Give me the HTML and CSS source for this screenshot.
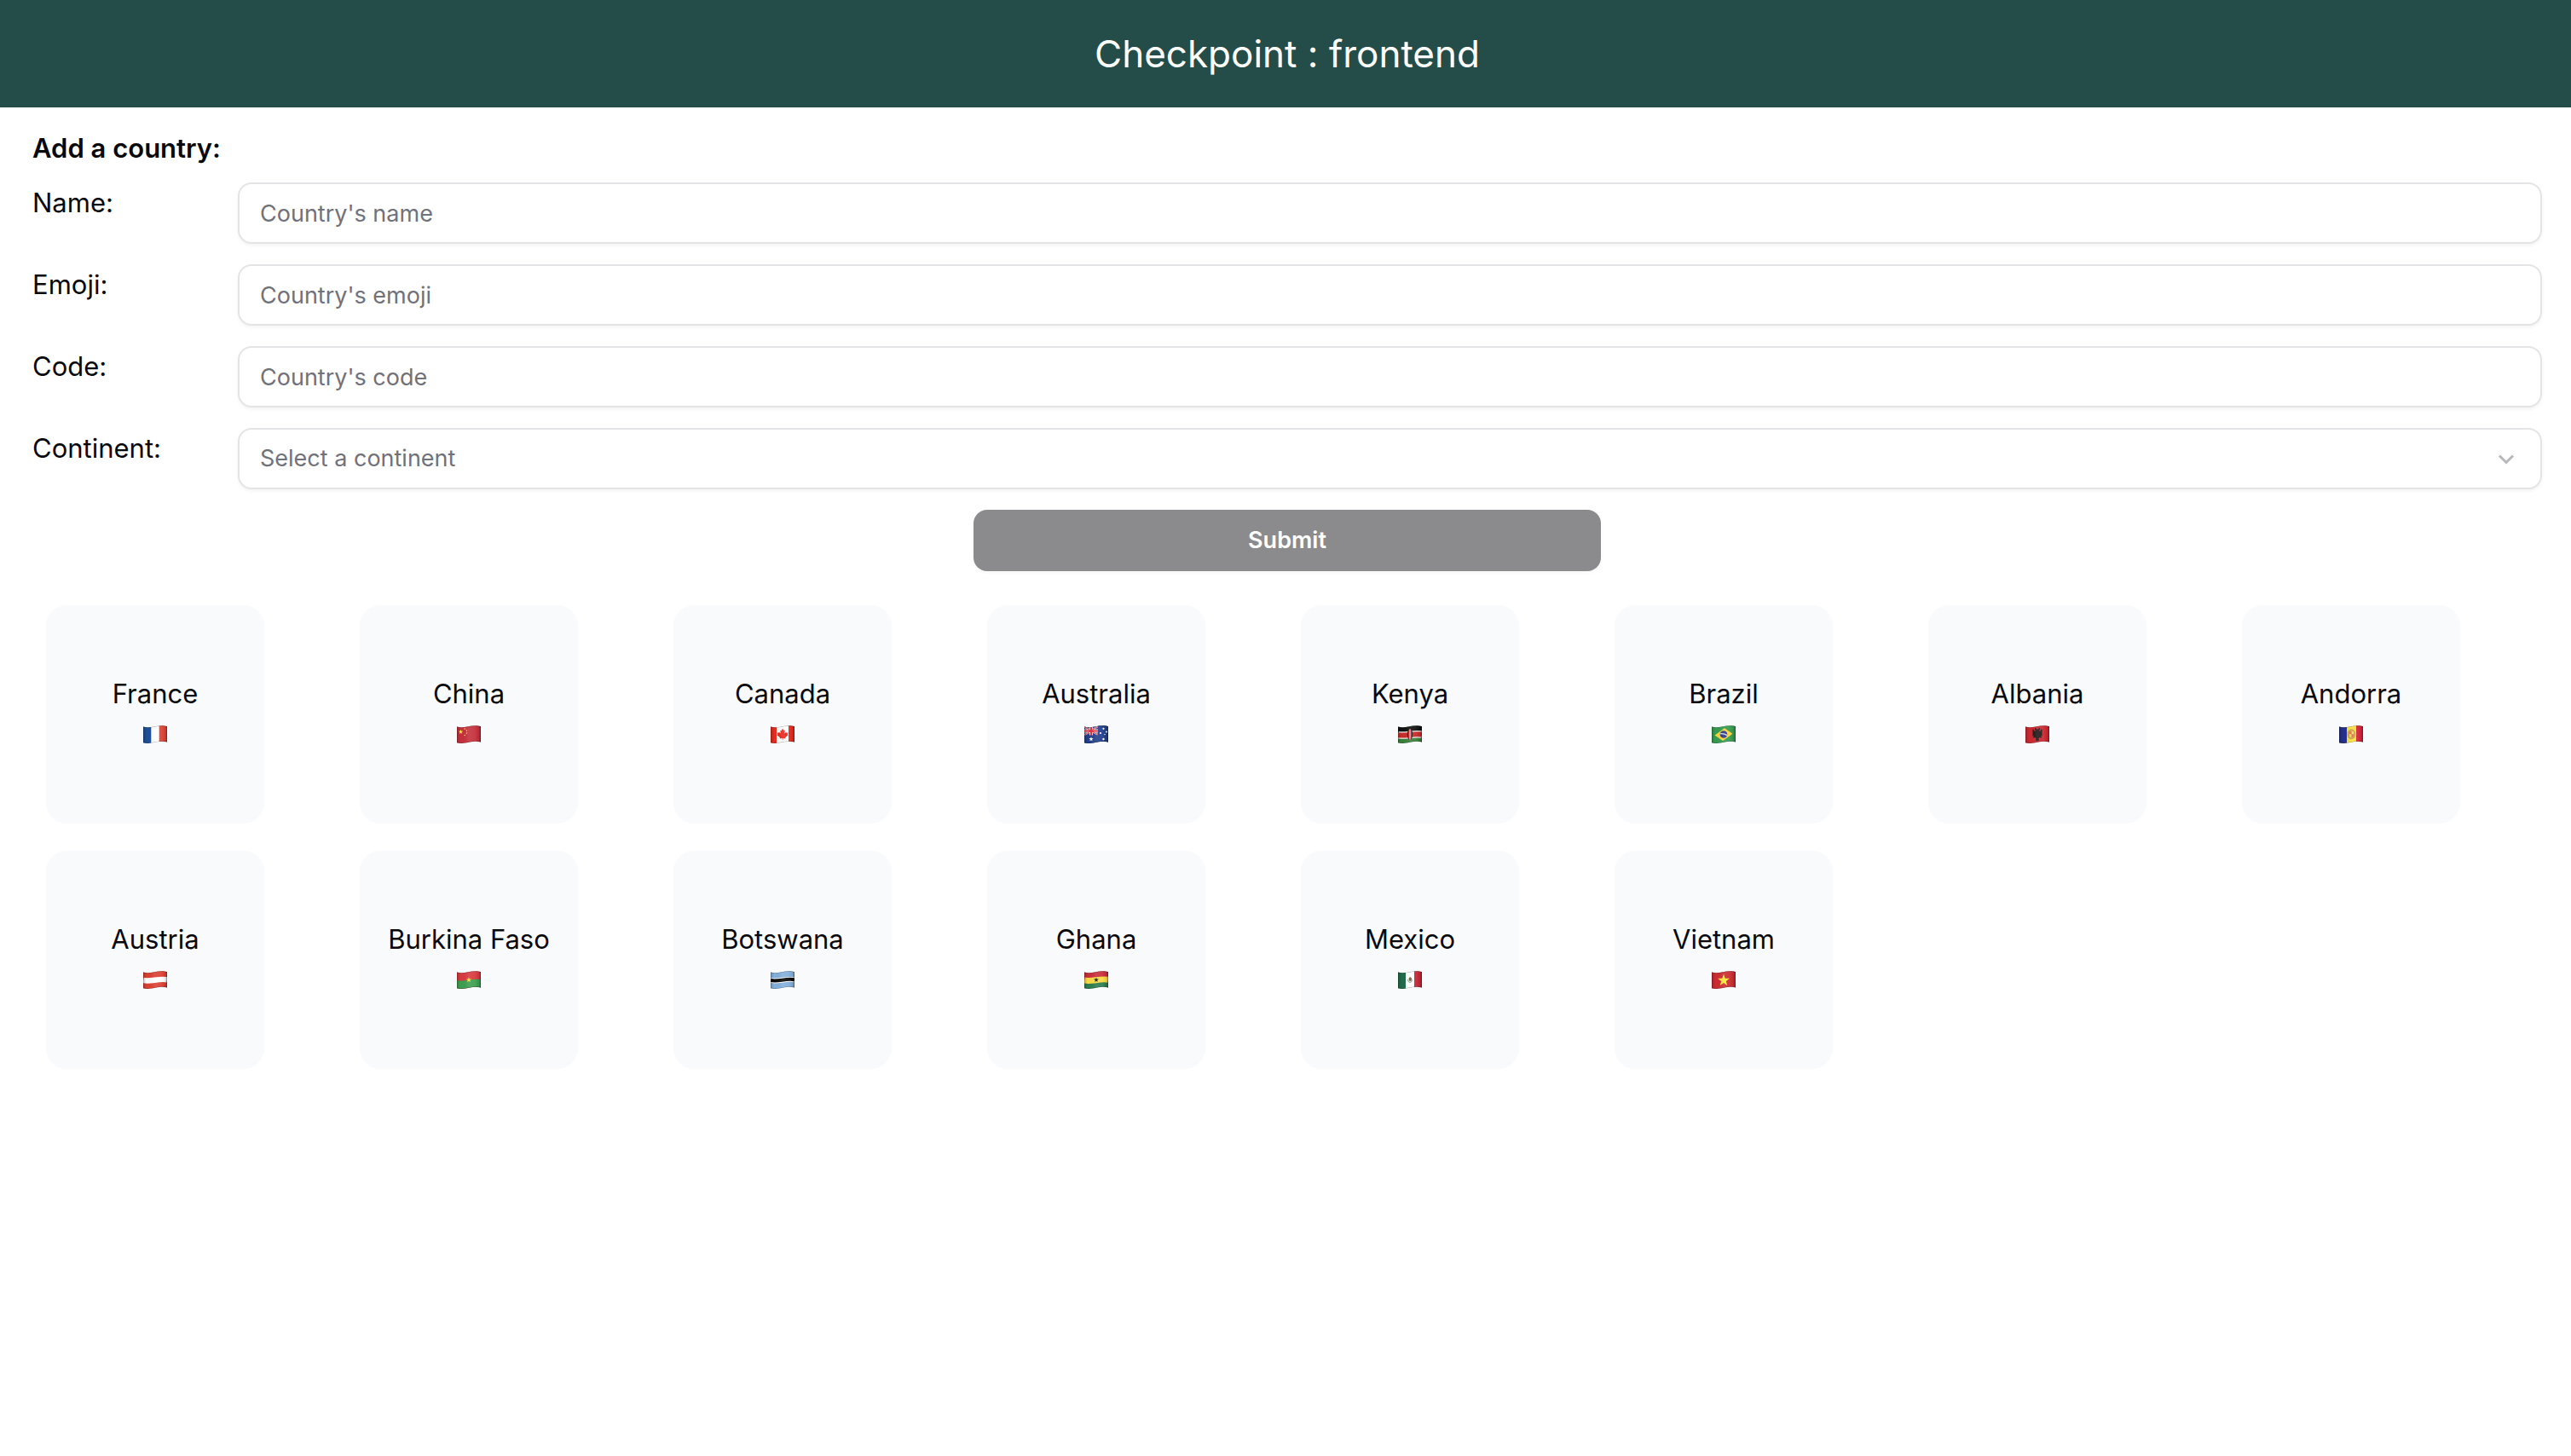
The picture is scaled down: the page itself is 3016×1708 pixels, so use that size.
FILE: index.html
```html
<!DOCTYPE html>
<html lang="en">
<head>
<meta charset="utf-8">
<meta name="viewport" content="width=device-width, initial-scale=1">
<title>Checkpoint : frontend</title>
<link rel="stylesheet" href="styles.css">
</head>
<body>
<header class="banner"><h1 class="banner-title">Checkpoint : frontend</h1></header>
<main class="content">
  <form class="country-form">
    <h2 class="form-title">Add a country:</h2>
    <div class="field">
      <label for="name">Name:</label>
      <input class="control" id="name" type="text" placeholder="Country's name">
    </div>
    <div class="field">
      <label for="emoji">Emoji:</label>
      <input class="control" id="emoji" type="text" placeholder="Country's emoji">
    </div>
    <div class="field">
      <label for="code">Code:</label>
      <input class="control" id="code" type="text" placeholder="Country's code">
    </div>
    <div class="field">
      <label for="continent">Continent:</label>
      <div class="select-wrap">
        <select class="control" id="continent"><option value="">Select a continent</option></select>
        <svg class="chevron" viewBox="0 0 32 32" aria-hidden="true"><path d="M8 12.500l8 8 8-8"/></svg>
      </div>
    </div>
    <button class="submit" type="submit" disabled>Submit</button>
  </form>

  <ul class="countries">
    <li><a class="card" href="#FR"><span>France</span>
      <svg class="flag" viewBox="0 0 28 21" aria-hidden="true">
        <defs>
          <clipPath id="wave"><path d="M0 1.500C4 2.600 8 2.200 13 1.200S24 -.3 28 1.200V19.500C24 18.300 20 18.600 14 19.800S4 21.300 0 20.200Z"/></clipPath>
          <linearGradient id="shade">
            <stop offset="0" stop-color="#000" stop-opacity=".2"/>
            <stop offset=".15" stop-color="#000" stop-opacity="0"/>
            <stop offset=".5" stop-color="#fff" stop-opacity=".1"/>
            <stop offset=".75" stop-color="#fff" stop-opacity=".06"/>
            <stop offset=".9" stop-color="#000" stop-opacity=".06"/>
            <stop offset="1" stop-color="#000" stop-opacity=".3"/>
          </linearGradient>
          <g id="gloss"><path fill="url(#shade)" d="M0 0h28v21H0z"/><path fill="none" stroke="#000" stroke-opacity=".35" stroke-width="1" d="M0 1.500C4 2.600 8 2.200 13 1.200S24 -.3 28 1.200V19.500C24 18.300 20 18.600 14 19.800S4 21.300 0 20.200Z"/></g>
          <path id="star" d="M0-5l1.200 3.400 3.600.1-2.900 2.200 1 3.500L0 2.100l-2.900 2.100 1-3.500-2.900-2.200 3.600-.1z"/>
        </defs>
        <g clip-path="url(#wave)"><path fill="#fff" d="M0 0h28v21H0z"/><path fill="#1f4f97" d="M0 0h9.300v21H0z"/><path fill="#df4435" d="M18.700 0H28v21h-9.300z"/><use href="#gloss"/></g>
      </svg></a></li>
    <li><a class="card" href="#CN"><span>China</span>
      <svg class="flag" viewBox="0 0 28 21" aria-hidden="true"><g clip-path="url(#wave)"><path fill="#c5303c" d="M0 0h28v21H0z"/><g fill="#ffe93b"><use href="#star" transform="translate(4.500 7.500) scale(.55)"/><circle cx="9.200" cy="4" r=".8"/><circle cx="11.500" cy="6" r=".8"/><circle cx="11.500" cy="9" r=".8"/><circle cx="9.200" cy="11.500" r=".8"/></g><use href="#gloss"/></g></svg></a></li>
    <li><a class="card" href="#CA"><span>Canada</span>
      <svg class="flag" viewBox="0 0 28 21" aria-hidden="true"><g clip-path="url(#wave)"><path fill="#fff" d="M0 0h28v21H0z"/><path fill="#e52d20" d="M0 0h7v21H0zM21 0h7v21h-7z"/><path fill="#e8281f" d="M14 3.500l1.500 2.700 1.300-.6-.5 4 2-2 .3 1.200 1.900-.2-.7 2 .8.700-3.500 3 .3 1.100-3-.4v2.200h-.7V15l-3 .4.3-1.100-3.500-3 .8-.7-.7-2 1.900.2.300-1.200 2 2-.5-4 1.300.6z"/><use href="#gloss"/></g></svg></a></li>
    <li><a class="card" href="#AU"><span>Australia</span>
      <svg class="flag" viewBox="0 0 28 21" aria-hidden="true"><g clip-path="url(#wave)"><path fill="#223f8b" d="M0 0h28v21H0z"/><path stroke="#e9dce6" stroke-width="2" d="M0 1.500L16 11M0 11.500L16 1"/><path stroke="#e9dce6" stroke-width="4" d="M8 0v12M0 6.500h16"/><path stroke="#df3442" stroke-width="1" d="M0 1.500L16 11M0 11.500L16 1"/><path stroke="#df3442" stroke-width="2" d="M8 0v12M0 6.500h16"/><path fill="#223f8b" d="M16 0h12v21H16zM0 11.500h16V21H0z"/><g fill="#fff"><use href="#star" transform="translate(8 16) scale(.55)"/><circle cx="22.500" cy="3.800" r="1.100"/><circle cx="19" cy="9" r="1.100"/><circle cx="26" cy="7.500" r="1.100"/><circle cx="24" cy="10.500" r=".7"/><circle cx="22.500" cy="16" r="1.200"/></g><use href="#gloss"/></g></svg></a></li>
    <li><a class="card" href="#KE"><span>Kenya</span>
      <svg class="flag" viewBox="0 0 28 21" aria-hidden="true"><g clip-path="url(#wave)"><path fill="#101212" d="M0 0h28v11H0z"/><path fill="#39803a" d="M0 11h28v10H0z"/><path fill="none" stroke="#f2eeec" stroke-width="8.500" d="M0 11.200C9 13 17 8.800 28 10.600"/><path fill="none" stroke="#c82c2b" stroke-width="6" d="M0 11.200C9 13 17 8.800 28 10.600"/><ellipse cx="14" cy="10.500" rx="3.200" ry="6.500" fill="#1b1516"/><ellipse cx="14" cy="10.500" rx="2.200" ry="6.500" fill="#bf2025"/><path stroke="#f4e9e7" stroke-width="1" d="M14 4.500v12"/><use href="#gloss"/></g></svg></a></li>
    <li><a class="card" href="#BR"><span>Brazil</span>
      <svg class="flag" viewBox="0 0 28 21" aria-hidden="true"><g clip-path="url(#wave)"><path fill="#369b4f" d="M0 0h28v21H0z"/><path fill="#fbd43a" d="M3.500 11.500L15 3.200l9.500 6.600L13 18z"/><circle cx="14" cy="10.500" r="4.300" fill="#27378b"/><path fill="none" stroke="#dce1f2" stroke-width="1.300" d="M10 9.800q4-.8 8 1.800"/><use href="#gloss"/></g></svg></a></li>
    <li><a class="card" href="#AL"><span>Albania</span>
      <svg class="flag" viewBox="0 0 28 21" aria-hidden="true"><g clip-path="url(#wave)"><path fill="#cc2930" d="M0 0h28v21H0z"/><path fill="#211819" d="M14 5l1.500-1.500L17 3v2l-1 1 1 1 2-3 .5 1v8l-1.500-1 1 3-2.500-1-1 1.500.5 2-2 1-2-1 .5-2-1-1.500-2.500 1 1-3-1.500 1V5L9 4l2 3 1-1-1-1V3l1.500.5z"/><use href="#gloss"/></g></svg></a></li>
    <li><a class="card" href="#AD"><span>Andorra</span>
      <svg class="flag" viewBox="0 0 28 21" aria-hidden="true"><g clip-path="url(#wave)"><path fill="#f8df3d" d="M0 0h28v21H0z"/><path fill="#24308c" d="M0 0h9v21H0z"/><path fill="#d5263a" d="M20 0h8v21h-8z"/><path fill="#d3a24b" stroke="#a98642" stroke-width=".6" d="M14.500 4.500l2.500 1 1.500 3v4L17 15l-2.500 1-3-1-1.300-3V8l1.800-2.500z"/><path fill="#e76b39" d="M12 7h2v3h-2zM15 10.500h2v3h-2z"/><path fill="#f5d55c" d="M15 7h2v3h-2zM12 10.500h2v3h-2z"/><use href="#gloss"/></g></svg></a></li>
    <li><a class="card" href="#AT"><span>Austria</span>
      <svg class="flag" viewBox="0 0 28 21" aria-hidden="true"><g clip-path="url(#wave)"><path fill="#dc4034" d="M0 0h28v21H0z"/><path fill="none" stroke="#fff" stroke-width="6.500" d="M0 11C9 13 17 8.500 28 10.200"/><use href="#gloss"/></g></svg></a></li>
    <li><a class="card" href="#BF"><span>Burkina Faso</span>
      <svg class="flag" viewBox="0 0 28 21" aria-hidden="true"><g clip-path="url(#wave)"><path fill="#d83a3e" d="M0 0h28v21H0z"/><path fill="#3c9f50" d="M0 11C9 13 17 8.500 28 10.200V21H0z"/><use href="#star" fill="#fce03b" transform="translate(14 10.500) scale(.65)"/><use href="#gloss"/></g></svg></a></li>
    <li><a class="card" href="#BW"><span>Botswana</span>
      <svg class="flag" viewBox="0 0 28 21" aria-hidden="true"><g clip-path="url(#wave)"><path fill="#83afdb" d="M0 0h28v21H0z"/><path fill="none" stroke="#fff" stroke-width="6" d="M0 11C9 13 17 8.500 28 10.200"/><path fill="none" stroke="#080808" stroke-width="4" d="M0 11C9 13 17 8.500 28 10.200"/><use href="#gloss"/></g></svg></a></li>
    <li><a class="card" href="#GH"><span>Ghana</span>
      <svg class="flag" viewBox="0 0 28 21" aria-hidden="true"><g clip-path="url(#wave)"><path fill="#c92e3b" d="M0 0h28v12H0z"/><path fill="#2d7d50" d="M0 11h28v10H0z"/><path fill="none" stroke="#fbda43" stroke-width="7" d="M0 11C9 13 17 8.500 28 10.200"/><use href="#star" fill="#111" transform="translate(14 10.500) scale(.6)"/><use href="#gloss"/></g></svg></a></li>
    <li><a class="card" href="#MX"><span>Mexico</span>
      <svg class="flag" viewBox="0 0 28 21" aria-hidden="true"><g clip-path="url(#wave)"><path fill="#fff" d="M0 0h28v21H0z"/><path fill="#216b4b" d="M0 0h9v21H0z"/><path fill="#c62839" d="M19 0h9v21h-9z"/><path fill="none" stroke="#719777" stroke-width="1" d="M11.500 10q.5 3.500 2.500 3.500t2.500-3.500"/><path fill="#765031" d="M12.500 9l1.500-2 2 1.500-.5 3-2 .5z"/><use href="#gloss"/></g></svg></a></li>
    <li><a class="card" href="#VN"><span>Vietnam</span>
      <svg class="flag" viewBox="0 0 28 21" aria-hidden="true"><g clip-path="url(#wave)"><path fill="#cb2c31" d="M0 0h28v21H0z"/><use href="#star" fill="#ffe936" transform="translate(14 11) scale(1.450)"/><use href="#gloss"/></g></svg></a></li>
  </ul>
</main>
</body>
</html>
```
FILE: styles.css
```css
* {
  box-sizing: border-box;
}

body {
  margin: 0;
  background: #fff;
  color: #09090b;
  font-family: Inter, "Liberation Sans", sans-serif;
  font-size: 31px;
  line-height: 48px;
}

.banner {
  padding: 31px 34px 31px 38px;
  background: #244d4a;
  color: #fff;
  text-align: center;
}

.banner-title {
  margin: 0;
  font-size: 44px;
  font-weight: 400;
  line-height: 64px;
}

.content {
  padding: 24px 34px 24px 38px;
}

.country-form {
  display: flex;
  flex-direction: column;
  gap: 24px;
}

.form-title {
  margin: 0 0 -8px;
  font-size: 31px;
  font-weight: 600;
  line-height: 48px;
}

.field {
  display: grid;
  grid-template-columns: 241px 1fr;
  align-items: start;
}

.control {
  display: block;
  width: 100%;
  height: 72px;
  padding: 0 24px;
  border: 2px solid #e4e4e6;
  border-radius: 16px;
  background: #fff;
  box-shadow: 0 2px 4px rgb(0 0 0 / 5%);
  color: #71717a;
  font: inherit;
  font-size: 27px;
  appearance: none;
}

.control::placeholder {
  color: #71717a;
  opacity: 1;
}

.select-wrap {
  position: relative;
}

.chevron {
  position: absolute;
  top: 20px;
  right: 26px;
  width: 32px;
  height: 32px;
  fill: none;
  stroke: #b8b8bc;
  stroke-width: 3;
  pointer-events: none;
}

.submit {
  align-self: center;
  width: 25%;
  height: 72px;
  border: 0;
  border-radius: 16px;
  background: #8b8b8d;
  box-shadow: 0 2px 4px rgb(0 0 0 / 3%);
  color: #fff;
  font: inherit;
  font-size: 27px;
  font-weight: 600;
}

.countries {
  display: grid;
  grid-template-columns: repeat(8, 1fr);
  margin: 24px 0 0;
  padding: 0;
  list-style: none;
}

.card {
  display: flex;
  flex-direction: column;
  align-items: center;
  justify-content: center;
  width: 256px;
  height: 256px;
  margin: 16px;
  border-radius: 24px;
  background: #f9fafc;
  color: inherit;
  text-decoration: none;
}

.flag {
  width: 28px;
  height: 21px;
  margin: 13px 0 14px;
}
```
